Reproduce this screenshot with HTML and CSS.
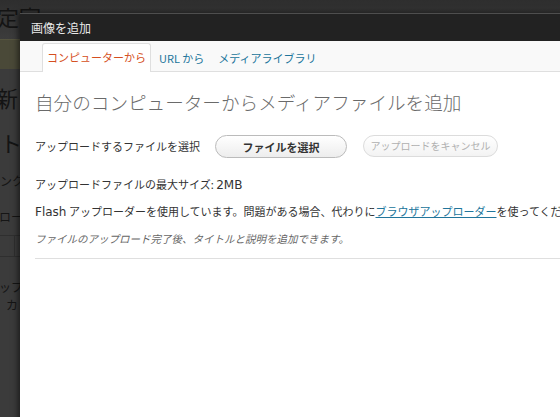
FILE: index.html
```html
<!DOCTYPE html>
<html lang="ja">
<head>
<meta charset="utf-8">
<title>画像を追加</title>
<link rel="stylesheet" href="styles.css">
</head>
<body>
<div class="page">
  <div class="bg">
    <div class="bg-head"><span class="bg-title">定室</span></div>
    <div class="bg-notice"></div>
    <div class="bg-h2">新</div>
    <div class="bg-h3">ト</div>
    <div class="bg-small s1">ンク</div>
    <div class="bg-small s2">ロード</div>
    <div class="bg-inputs"><span class="bg-input"></span></div>
    <div class="bg-small s3">ップ</div>
    <div class="bg-small s4">カ</div>
  </div>
  <div class="modal">
    <div class="modal-title">画像を追加</div>
    <div class="modal-body">
      <div class="tabs">
        <a class="tab active">コンピューターから</a>
        <a class="tab">URL から</a>
        <a class="tab">メディアライブラリ</a>
      </div>
      <div class="content">
        <h3 class="heading">自分のコンピューターからメディアファイルを追加</h3>
        <div class="select-row">
          <span class="label">アップロードするファイルを選択</span>
          <span class="btn btn-select">ファイルを選択</span>
          <span class="btn btn-cancel">アップロードをキャンセル</span>
        </div>
        <p class="line max">アップロードファイルの最大サイズ: <span class="latin">2MB</span></p>
        <p class="line flash"><span class="latin">Flash</span> アップローダーを使用しています。問題がある場合、代わりに<a class="link">ブラウザアップローダー</a>を使ってください。</p>
        <p class="line note">ファイルのアップロード完了後、タイトルと説明を追加できます。</p>
        <div class="rule"></div>
      </div>
    </div>
  </div>
</div>
</body>
</html>
```

FILE: styles.css
```css
html, body {
  margin: 0;
  padding: 0;
}
body {
  width: 560px;
  height: 417px;
  overflow: hidden;
  background: #3a3a3a;
  font-family: "Noto Sans CJK JP", sans-serif;
}
.page {
  position: relative;
  width: 560px;
  height: 417px;
  overflow: hidden;
}

/* dimmed page behind the dialog */
.bg {
  display: flex;
  flex-direction: column;
  height: 417px;
  background: #3b3b3b;
  color: #111;
}
.bg-head {
  height: 39px;
  background: linear-gradient(#2e2e2e, #3c3c3c);
  box-sizing: border-box;
  padding-top: 2px;
}
.bg-title {
  display: block;
  font-size: 22px;
  line-height: 28px;
  margin-left: -3px;
  color: #141414;
}
.bg-notice {
  height: 29px;
  background: #4a4938;
  border-top: 1px solid #55543f;
}
.bg-h2 {
  margin-top: 15px;
  font-size: 22px;
  line-height: 26px;
  margin-left: -4px;
  color: #141414;
}
.bg-h3 {
  margin-top: 19px;
  font-size: 22px;
  line-height: 26px;
  color: #141414;
}
.bg-small {
  font-size: 12px;
  line-height: 16px;
  color: #151515;
}
.s1 { margin-top: 18px; }
.s2 { margin-top: 20px; margin-left: -1px; }
.s3 { margin-top: 22px; margin-left: -1px; }
.s4 { margin-top: 2px; margin-left: 6px; }
.bg-inputs {
  margin-top: 10px;
  height: 20px;
  border-top: 1px solid #2f2f2f;
  border-bottom: 1px solid #2f2f2f;
}
.bg-input {
  display: block;
  width: 14px;
  height: 20px;
  border-right: 1px solid #2f2f2f;
}

/* dialog */
.modal {
  position: absolute;
  left: 20px;
  top: 13px;
  right: -20px;
  bottom: -20px;
  background: #fff;
  box-shadow: -2px 0 6px rgba(0, 0, 0, 0.55);
  display: flex;
  flex-direction: column;
}
.modal-title {
  height: 27px;
  background: #222;
  border-top: 1px solid #4e4e4e;
  color: #e8e8e8;
  font-size: 12px;
  line-height: 27px;
  padding-left: 11px;
}
.modal-body {
  flex: 1;
  background: #fff;
}
.tabs {
  display: flex;
  align-items: flex-end;
  height: 30px;
  background: #f9f9f9;
  border-bottom: 1px solid #dfdfdf;
  padding-left: 22px;
}
.tab {
  display: block;
  font-size: 11px;
  line-height: 27px;
  height: 28px;
  padding: 0 6px 0 6px;
  color: #21759b;
  margin-bottom: -1px;
  box-sizing: border-box;
  border: 1px solid transparent;
  border-bottom: none;
  white-space: nowrap;
}
.tab.active {
  color: #d54e21;
  background: #fff;
  border-color: #dfdfdf;
  border-radius: 3px 3px 0 0;
  padding: 0 4px 0 4px;
  margin-right: 1px;
  height: 29px;
}
.content {
  padding-left: 15px;
}
.heading {
  margin: 16px 0 0 0;
  font-size: 18.6px;
  line-height: 28px;
  font-weight: 300;
  color: #6a6a6a;
  white-space: nowrap;
}
.select-row {
  display: flex;
  align-items: center;
  margin-top: 18px;
  height: 24px;
  white-space: nowrap;
}
.label {
  font-size: 11px;
  color: #333;
  width: 180px;
}
.btn {
  display: flex;
  align-items: center;
  justify-content: center;
  box-sizing: border-box;
  border-radius: 12px;
  white-space: nowrap;
}
.btn-select {
  width: 132px;
  height: 23px;
  margin-top: 1px;
  border: 1px solid #bbb;
  background: linear-gradient(#ffffff, #ededed);
  font-size: 11px;
  font-weight: 700;
  color: #333;
}
.btn-cancel {
  width: 135px;
  height: 22px;
  margin-left: 16px;
  margin-top: -1px;
  border: 1px solid #dcdcdc;
  background: linear-gradient(#ffffff, #f3f3f3);
  font-size: 10px;
  color: #b0b0b0;
}
.line {
  margin: 0;
  font-size: 11px;
  line-height: 16px;
  color: #333;
  white-space: nowrap;
}
.latin {
  font-family: "DejaVu Sans", sans-serif;
  font-size: 12px;
}
.max { margin-top: 18px; }
.flash { margin-top: 10px; }
.link {
  color: #21759b;
  text-decoration: underline;
}
.note {
  margin-top: 11px;
  font-style: italic;
  color: #666;
  font-size: 10.5px;
}
.rule {
  margin-top: 11px;
  height: 1px;
  background: #dfdfdf;
}
```
